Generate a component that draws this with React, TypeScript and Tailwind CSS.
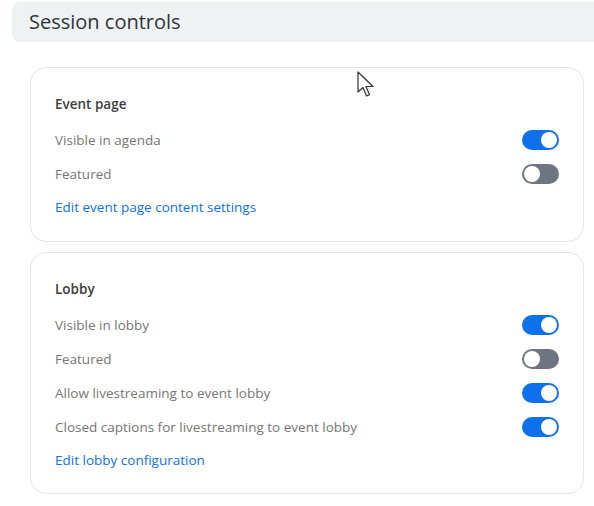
import React, { useState } from 'react';

type Row = { label: string; on: boolean };

function Toggle({ on, onClick }: { on: boolean; onClick: () => void }) {
  return (
    <button
      onClick={onClick}
      className={`w-[37px] h-[20px] rounded-full flex items-center p-[2px] ${on ? 'bg-[#0e71eb] justify-end' : 'bg-[#6e7580] justify-start'}`}
    >
      <span className="block w-[16px] h-[16px] rounded-full bg-white" />
    </button>
  );
}

function Card({ title, rows, link, pb }: { title: string; rows: Row[]; link: string; pb: string }) {
  const [state, setState] = useState(rows.map(r => r.on));
  return (
    <div className={`ml-[30px] w-[554px] rounded-[16px] border border-[#e3e6ea] bg-white pl-[24px] pr-[24px] pt-[19px] ${pb}`}>
      <div className="h-[34px] flex items-center text-[13.5px] font-semibold text-[#3d3d3d]">{title}</div>
      <div className="mt-[2px]">
        {rows.map((r, i) => (
          <div key={r.label} className="h-[34px] flex items-center justify-between">
            <span className="text-[13.5px] text-[#767676]">{r.label}</span>
            <Toggle on={state[i]} onClick={() => setState(s => s.map((v, j) => (j === i ? !v : v)))} />
          </div>
        ))}
        <div className="h-[33px] flex items-center">
          <a className="text-[13.5px] text-[#0e71eb] cursor-pointer">{link}</a>
        </div>
      </div>
    </div>
  );
}

export default function App() {
  return (
    <div className="relative w-[594px] h-[506px] bg-white overflow-hidden" style={{ fontFamily: '"Open Sans", "Noto Sans", sans-serif' }}>
      <div className="pt-[2px]">
        <div className="ml-[12px] h-[40px] rounded-l-[8px] bg-[#eff2f3] pl-[17px] flex items-center">
          <h2 className="text-[20px] text-[#2f3437]">Session controls</h2>
        </div>
      </div>

      <div className="mt-[25px] flex flex-col gap-[10px]">
        <Card
          title="Event page"
          pb="pb-[17px]"
          rows={[
            { label: 'Visible in agenda', on: true },
            { label: 'Featured', on: false },
          ]}
          link="Edit event page content settings"
        />
        <Card
          title="Lobby"
          pb="pb-[16px]"
          rows={[
            { label: 'Visible in lobby', on: true },
            { label: 'Featured', on: false },
            { label: 'Allow livestreaming to event lobby', on: true },
            { label: 'Closed captions for livestreaming to event lobby', on: true },
          ]}
          link="Edit lobby configuration"
        />
      </div>

      {/* mouse pointer */}
      <svg className="absolute left-[357px] top-[71px]" width="18" height="28" viewBox="0 0 18 28">
        <path d="M1 1 L1 21 L6 16.5 L9.5 25 L12.5 23.8 L9 15.5 L16 15.5 Z" fill="white" stroke="#333" strokeWidth="1.2" strokeLinejoin="round" />
      </svg>
    </div>
  );
}
